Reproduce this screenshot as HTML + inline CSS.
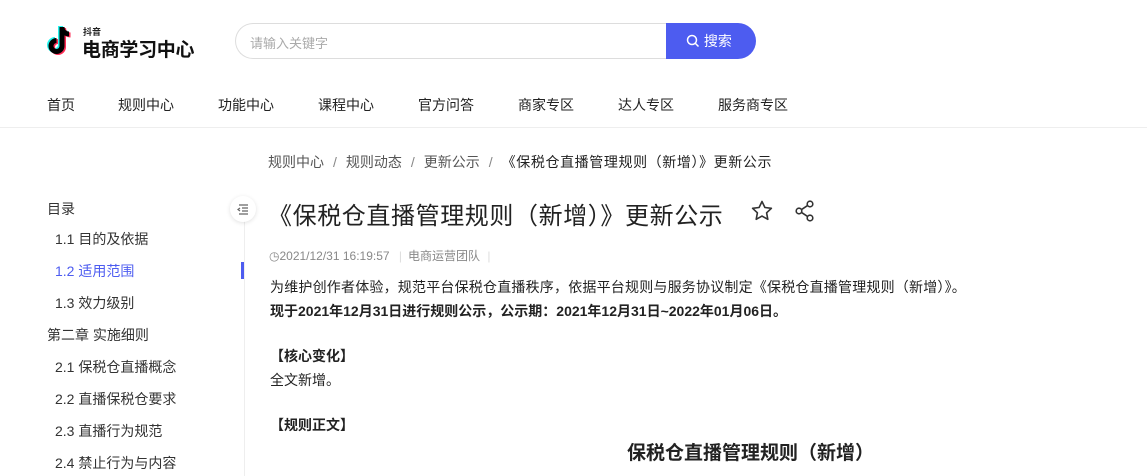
<!DOCTYPE html>
<html><head><meta charset="utf-8"><style>
*{margin:0;padding:0;box-sizing:border-box}
body{width:1147px;height:476px;overflow:hidden;background:#fff;font-family:"Liberation Sans","Noto Sans CJK SC",sans-serif;color:#222;position:relative}
.a{position:absolute;white-space:nowrap}
.nav span{position:absolute;top:95px;font-size:14px;color:#222}
.toc div{position:absolute;font-size:14px;color:#333}
.p{font-size:14px;color:#222}
.sl{margin:0 9px;color:#888}
</style></head><body>
<svg class="a" style="left:46px;top:24px" width="30" height="34" viewBox="0 0 30 34">
<path d="M16 3v19a5.5 5.5 0 1 1-5.5-5.5" fill="none" stroke="#25f4ee" stroke-width="5" transform="translate(-1.5,-1)"/>
<path d="M16 3c0 4 3 7 7 7" fill="none" stroke="#25f4ee" stroke-width="5" transform="translate(-1.5,-1)"/>
<path d="M16 3v19a5.5 5.5 0 1 1-5.5-5.5" fill="none" stroke="#fe2c55" stroke-width="5" transform="translate(1.5,1)"/>
<path d="M16 3c0 4 3 7 7 7" fill="none" stroke="#fe2c55" stroke-width="5" transform="translate(1.5,1)"/>
<path d="M16 3v19a5.5 5.5 0 1 1-5.5-5.5" fill="none" stroke="#000" stroke-width="5"/>
<path d="M16 3c0 4 3 7 7 7" fill="none" stroke="#000" stroke-width="5"/>
</svg>
<div class="a" style="left:83px;top:25px;font-size:9px;font-weight:bold">抖音</div>
<div class="a" style="left:82px;top:35px;font-size:19px;font-weight:bold;color:#111;letter-spacing:-0.3px">电商学习中心</div>
<div class="a" style="left:235px;top:23px;width:440px;height:36px;border:1px solid #ddd;border-radius:18px 0 0 18px;border-right:none"></div>
<div class="a" style="left:250px;top:33px;font-size:13px;color:#aaa">请输入关键字</div>
<div class="a" style="left:666px;top:23px;width:90px;height:36px;background:#4d5cf0;border-radius:0 18px 18px 0;color:#fff;font-size:14px;line-height:36px;padding-left:20px">
<svg width="14" height="14" viewBox="0 0 14 14" style="vertical-align:-2px"><circle cx="6" cy="6" r="4.5" fill="none" stroke="#fff" stroke-width="1.5"/><path d="M9.5 9.5l3 3" stroke="#fff" stroke-width="1.5"/></svg> 搜索</div>
<div class="nav"><span style="left:47px">首页</span><span style="left:118px">规则中心</span><span style="left:218px">功能中心</span><span style="left:318px">课程中心</span><span style="left:418px">官方问答</span><span style="left:518px">商家专区</span><span style="left:618px">达人专区</span><span style="left:718px">服务商专区</span></div>
<div class="a" style="left:0;top:127px;width:1147px;height:1px;background:#eee"></div>
<div class="a" style="left:268px;top:152px;font-size:14px;color:#555">规则中心<span class="sl">/</span>规则动态<span class="sl">/</span>更新公示<span class="sl">/</span><span style="color:#222;letter-spacing:0.6px">《保税仓直播管理规则（新增）》更新公示</span></div>
<div class="toc">
<div style="left:47px;top:199px">目录</div>
<div style="left:55px;top:229px">1.1 目的及依据</div>
<div style="left:55px;top:261px;color:#4d5cf0">1.2 适用范围</div>
<div style="left:55px;top:293px">1.3 效力级别</div>
<div style="left:47px;top:325px">第二章 实施细则</div>
<div style="left:55px;top:357px">2.1 保税仓直播概念</div>
<div style="left:55px;top:389px">2.2 直播保税仓要求</div>
<div style="left:55px;top:421px">2.3 直播行为规范</div>
<div style="left:55px;top:453px">2.4 禁止行为与内容</div>
</div>
<div class="a" style="left:244px;top:220px;width:1px;height:256px;background:#eee"></div>
<div class="a" style="left:241px;top:262px;width:3px;height:17px;background:#4d5cf0"></div>
<div class="a" style="left:230px;top:196px;width:26px;height:26px;border-radius:13px;background:#fff;box-shadow:0 1px 4px rgba(0,0,0,.12)"><svg width="26" height="26" viewBox="0 0 26 26"><path d="M9 9h9M12 12h6M12 15h6M9 18h9M10 12l-2 1.5 2 1.5" stroke="#666" stroke-width="1.2" fill="none"/></svg></div>
<div class="a" style="left:268px;top:196px;font-size:24px;color:#222;letter-spacing:0.6px">《保税仓直播管理规则（新增）》更新公示</div>
<svg class="a" style="left:750px;top:199px" width="24" height="24" viewBox="0 0 24 24"><path d="M12 2.5l2.9 6 6.5.8-4.8 4.5 1.2 6.5L12 17.1l-5.8 3.2 1.2-6.5L2.6 9.3l6.5-.8z" fill="none" stroke="#333" stroke-width="1.6" stroke-linejoin="round"/></svg>
<svg class="a" style="left:794px;top:199px" width="22" height="24" viewBox="0 0 22 24"><circle cx="16" cy="5" r="2.8" fill="none" stroke="#333" stroke-width="1.6"/><circle cx="5" cy="12" r="2.8" fill="none" stroke="#333" stroke-width="1.6"/><circle cx="16" cy="19" r="2.8" fill="none" stroke="#333" stroke-width="1.6"/><path d="M7.5 10.6l6-4M7.5 13.4l6 4" stroke="#333" stroke-width="1.6"/></svg>
<div class="a" style="left:269px;top:247px;font-size:12px;color:#888">&#x25F7;2021/12/31 16:19:57 <span style="color:#ddd;margin:0 6px">|</span>电商运营团队 <span style="color:#ddd;margin-left:4px">|</span></div>
<div class="a p" style="left:270px;top:277px;letter-spacing:0.2px">为维护创作者体验，规范平台保税仓直播秩序，依据平台规则与服务协议制定《保税仓直播管理规则（新增）》。</div>
<div class="a p" style="left:270px;top:301px;font-weight:bold">现于2021年12月31日进行规则公示，公示期：2021年12月31日~2022年01月06日。</div>
<div class="a p" style="left:270px;top:346px;font-weight:bold">【核心变化】</div>
<div class="a p" style="left:270px;top:370px">全文新增。</div>
<div class="a p" style="left:270px;top:415px;font-weight:bold">【规则正文】</div>
<div class="a" style="left:627px;top:438px;font-size:19px;font-weight:bold">保税仓直播管理规则（新增）</div>
</body></html>
